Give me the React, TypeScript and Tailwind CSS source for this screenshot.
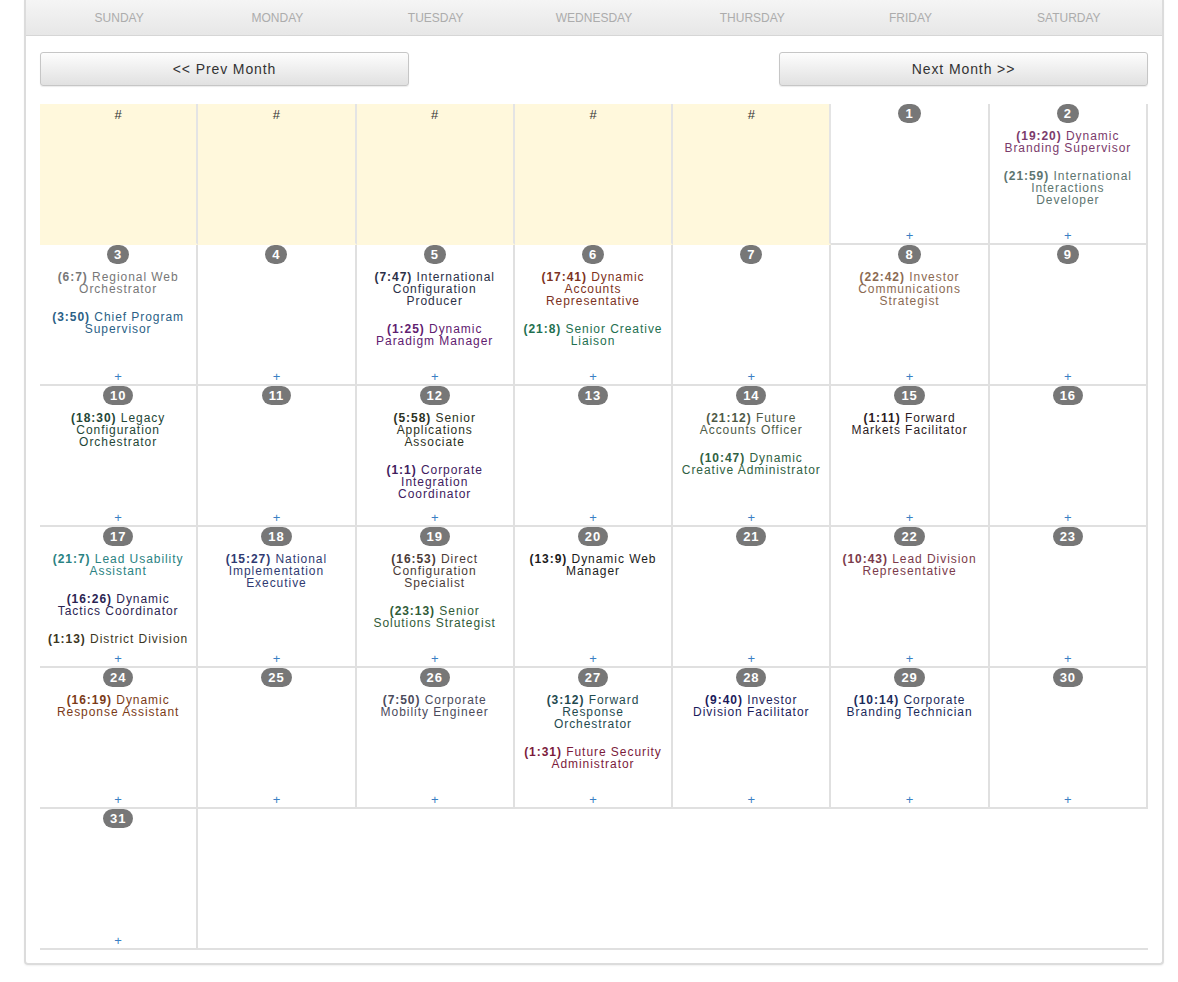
import React from 'react';

type CalEvent = { time: string; lines: string[]; color: string };
type Day = { n: number | null; events: CalEvent[] };

const DAY_NAMES = ['Sunday', 'Monday', 'Tuesday', 'Wednesday', 'Thursday', 'Friday', 'Saturday'];

const EVENTS: Record<number, CalEvent[]> = {
  2: [
    { time: '19:20', lines: ['Dynamic', 'Branding Supervisor'], color: '#7b3b6b' },
    { time: '21:59', lines: ['International', 'Interactions', 'Developer'], color: '#5d7570' },
  ],
  3: [
    { time: '6:7', lines: ['Regional Web', 'Orchestrator'], color: '#777777' },
    { time: '3:50', lines: ['Chief Program', 'Supervisor'], color: '#2b5f86' },
  ],
  5: [
    { time: '7:47', lines: ['International', 'Configuration', 'Producer'], color: '#2b3047' },
    { time: '1:25', lines: ['Dynamic', 'Paradigm Manager'], color: '#5f2070' },
  ],
  6: [
    { time: '17:41', lines: ['Dynamic', 'Accounts', 'Representative'], color: '#7c3222' },
    { time: '21:8', lines: ['Senior Creative', 'Liaison'], color: '#1e7050' },
  ],
  8: [{ time: '22:42', lines: ['Investor', 'Communications', 'Strategist'], color: '#8b6a52' }],
  10: [{ time: '18:30', lines: ['Legacy', 'Configuration', 'Orchestrator'], color: '#244636' }],
  12: [
    { time: '5:58', lines: ['Senior', 'Applications', 'Associate'], color: '#2b3122' },
    { time: '1:1', lines: ['Corporate', 'Integration', 'Coordinator'], color: '#40205e' },
  ],
  14: [
    { time: '21:12', lines: ['Future', 'Accounts Officer'], color: '#4e5a47' },
    { time: '10:47', lines: ['Dynamic', 'Creative Administrator'], color: '#2f6142' },
  ],
  15: [{ time: '1:11', lines: ['Forward', 'Markets Facilitator'], color: '#2b1a22' }],
  17: [
    { time: '21:7', lines: ['Lead Usability', 'Assistant'], color: '#2a8282' },
    { time: '16:26', lines: ['Dynamic', 'Tactics Coordinator'], color: '#2b2452' },
    { time: '1:13', lines: ['District Division'], color: '#3b3622' },
  ],
  18: [{ time: '15:27', lines: ['National', 'Implementation', 'Executive'], color: '#303b72' }],
  19: [
    { time: '16:53', lines: ['Direct', 'Configuration', 'Specialist'], color: '#4b3b37' },
    { time: '23:13', lines: ['Senior', 'Solutions Strategist'], color: '#305b37' },
  ],
  20: [{ time: '13:9', lines: ['Dynamic Web', 'Manager'], color: '#1b1b1b' }],
  22: [{ time: '10:43', lines: ['Lead Division', 'Representative'], color: '#7b3b4b' }],
  24: [{ time: '16:19', lines: ['Dynamic', 'Response Assistant'], color: '#7b3b17' }],
  26: [{ time: '7:50', lines: ['Corporate', 'Mobility Engineer'], color: '#4b4b5b' }],
  27: [
    { time: '3:12', lines: ['Forward', 'Response', 'Orchestrator'], color: '#1f4a4f' },
    { time: '1:31', lines: ['Future Security', 'Administrator'], color: '#7b1b3b' },
  ],
  28: [{ time: '9:40', lines: ['Investor', 'Division Facilitator'], color: '#1b1b5b' }],
  29: [{ time: '10:14', lines: ['Corporate', 'Branding Technician'], color: '#1b2b5b' }],
};

const days: Day[] = [
  ...Array.from({ length: 5 }, () => ({ n: null, events: [] })),
  ...Array.from({ length: 31 }, (_, i) => ({ n: i + 1, events: EVENTS[i + 1] || [] })),
];

const EventItem = ({ ev }: { ev: CalEvent }) => (
  <div className="text-center text-[12px] leading-[12px] tracking-[0.95px] whitespace-nowrap" style={{ color: ev.color }}>
    <span className="font-bold">({ev.time})</span> {ev.lines[0]}
    {ev.lines.slice(1).map((l, i) => (
      <div key={i}>{l}</div>
    ))}
  </div>
);

const DayCell = ({ day }: { day: Day }) => {
  if (day.n === null) {
    return (
      <div className="h-[141px] bg-[#fff8dc] border-r-2 border-b-2 border-r-[#e4e4e4] border-b-transparent flex justify-center">
        <div className="h-[19px] leading-[22px] text-[13px] text-[#333]">#</div>
      </div>
    );
  }
  return (
    <div className="h-[141px] border-r-2 border-b-2 border-[#e0e0e0] flex flex-col items-center">
      <div className="h-[19px] min-w-[20px] px-[7px] rounded-full bg-[#777] text-white text-[13px] font-bold leading-[19px] tracking-[0.9px] text-center">
        {day.n}
      </div>
      <div className="mt-[7px] flex flex-col gap-4">
        {day.events.map((ev, i) => (
          <EventItem key={i} ev={ev} />
        ))}
      </div>
      <div className="mt-auto pb-[1px] text-[13px] leading-[12px] text-[#3b7fc4]">+</div>
    </div>
  );
};

const NavButton = ({ label }: { label: string }) => (
  <button className="w-[369px] h-[34px] rounded-[3px] border border-[#c6c6c6] bg-linear-to-b from-[#fdfdfd] to-[#e1e1e1] shadow-[0_1px_1px_rgba(0,0,0,0.08)] text-[14px] tracking-[0.9px] text-[#333]">
    {label}
  </button>
);

const App = () => {
  return (
    <div className="min-h-[982px] bg-white" style={{ fontFamily: '"Liberation Sans", Arial, sans-serif' }}>
      <div className="ml-[24px] w-[1140px] border-2 border-t-0 border-[#dcdcdc] rounded-b-[4px] shadow-[0_1px_2px_rgba(0,0,0,0.06)] pb-[13px]">
        <div className="h-[36px] bg-linear-to-b from-[#f5f5f5] to-[#e7e7e7] border-b border-[#d6d6d6] px-[14px]">
          <div className="w-[1108px] grid grid-cols-7">
            {DAY_NAMES.map((d) => (
              <div key={d} className="text-center uppercase text-[12px] leading-[36px] text-[#acacac]">
                {d}
              </div>
            ))}
          </div>
        </div>
        <div className="px-[14px]">
          <div className="w-[1108px] mt-[16px] flex justify-between">
            <NavButton label="<< Prev Month" />
            <NavButton label="Next Month >>" />
          </div>
          <div className="w-[1108px] mt-[18px] grid grid-cols-7">
            {days.map((d, i) => (
              <DayCell key={i} day={d} />
            ))}
            <div className="col-span-6 border-b-2 border-[#e0e0e0]" />
          </div>
        </div>
      </div>
    </div>
  );
};

export default App;
